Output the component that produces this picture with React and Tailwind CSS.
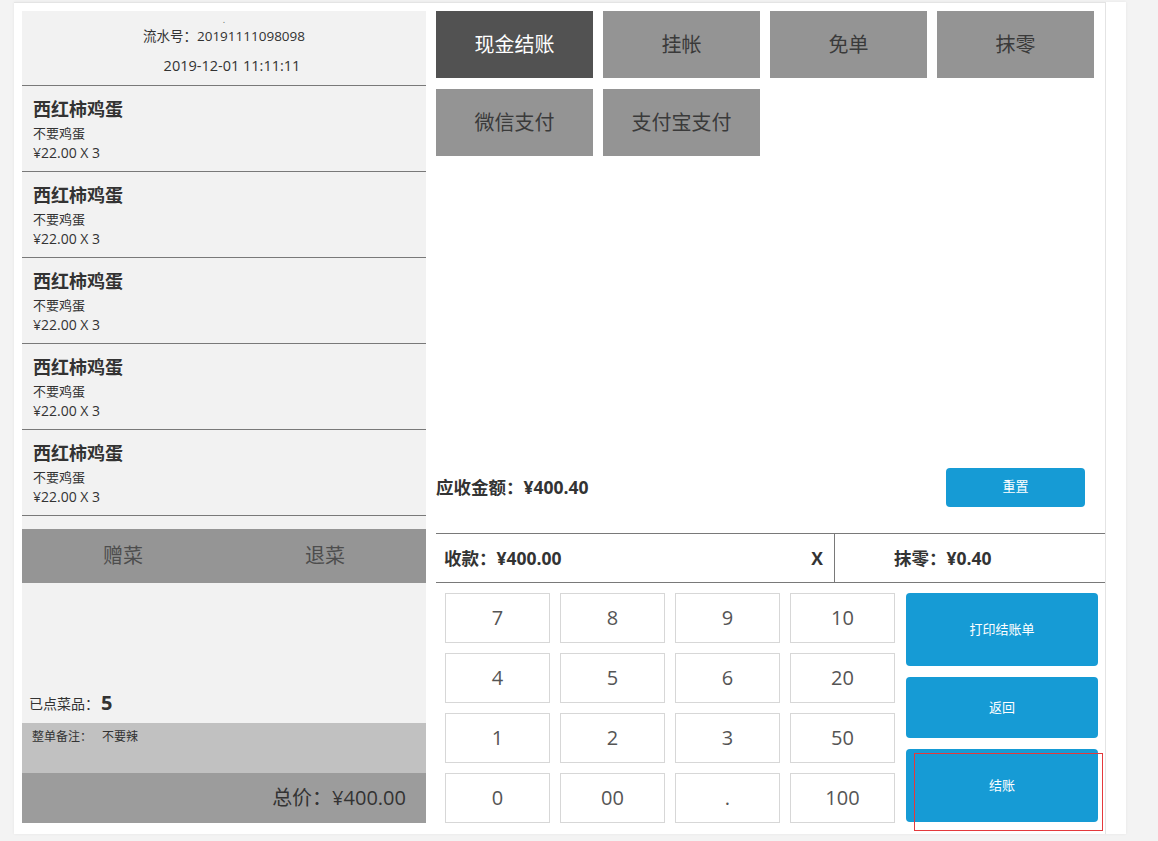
import React from 'react';

const items = Array.from({ length: 5 }, () => ({ name: '西红柿鸡蛋', note: '不要鸡蛋', price: '¥22.00 X 3' }));
const payTypes = ['现金结账', '挂帐', '免单', '抹零', '微信支付', '支付宝支付'];
const keys = ['7', '8', '9', '10', '4', '5', '6', '20', '1', '2', '3', '50', '0', '00', '.', '100'];

const App = () => {
  return (
    <div className="min-h-screen bg-[#f3f3f3] pt-[2px] pl-[14px] font-['Open_Sans','Noto_Sans_CJK_SC',sans-serif] text-[#333]">
      <div className="w-[1112px] h-[832px] bg-white shadow-[0_0_3px_rgba(0,0,0,0.06)]">
        <div className="w-[1092px] h-full border-t border-r border-[#e4e4e4] pl-[8px] pt-[8px] flex gap-[10px]">
          {/* left: order list */}
          <div className="w-[404px] h-[812px] bg-[#f2f2f2] flex flex-col">
            <div className="h-[75px] border-b border-[#797979] flex flex-col items-center shrink-0">
              <div className="text-[9px] leading-[10px] h-[10px] mt-[4px] text-[#666]">.</div>
              <div className="text-[13.5px] leading-[20px] mt-[1px]">流水号：20191111098098</div>
              <div className="text-[14.5px] leading-[20px] mt-[10px] pl-[16px]">2019-12-01 11:11:11</div>
            </div>
            {items.map((it, i) => (
              <div key={i} className="h-[86px] border-b border-[#797979] px-[11px] pt-[11px] shrink-0">
                <div className="text-[18px] leading-[24px] font-bold">{it.name}</div>
                <div className="text-[13px] leading-[20px] mt-[2px]">{it.note}</div>
                <div className="text-[14px] leading-[20px]">{it.price}</div>
              </div>
            ))}
            <div className="h-[13px] shrink-0" />
            <div className="h-[54px] bg-[#959595] grid grid-cols-2 text-[20px] text-[#4d4d4d] shrink-0">
              <div className="flex items-center justify-center">赠菜</div>
              <div className="flex items-center justify-center">退菜</div>
            </div>
            <div className="flex-1 flex items-end pl-[7px] pb-[8px]">
              <span className="text-[14px] leading-[22px]">已点菜品：</span>
              <span className="text-[20px] leading-[25px] font-bold ml-[2px]">5</span>
            </div>
            <div className="h-[50px] bg-[#c1c1c1] flex text-[12px] leading-[28px] pl-[10px] shrink-0">
              <span>整单备注：</span>
              <span className="ml-[10px]">不要辣</span>
            </div>
            <div className="h-[50px] bg-[#9c9c9c] flex items-center justify-end pr-[20px] text-[20px] text-[#333] shrink-0">
              总价：¥400.00
            </div>
          </div>

          {/* right: payment */}
          <div className="w-[669px] h-[812px] flex flex-col">
            <div className="grid grid-cols-[repeat(4,157px)] auto-rows-[67px] gap-x-[10px] gap-y-[11px] shrink-0">
              {payTypes.map((p, i) => (
                <div
                  key={p}
                  className={`flex items-center justify-center text-[20px] ${i === 0 ? 'bg-[#525252] text-white' : 'bg-[#949494] text-[#3a3a3a]'}`}
                >
                  {p}
                </div>
              ))}
            </div>
            <div className="flex-1" />
            <div className="h-[40px] flex items-center justify-between shrink-0">
              <div className="text-[17.5px] font-bold">应收金额：¥400.40</div>
              <button className="w-[139px] h-[39px] mr-[20px] rounded-[4px] bg-[#169bd5] text-white text-[13px]">重置</button>
            </div>
            <div className="h-[26px] shrink-0" />
            <div className="h-[50px] border-t border-b border-[#797979] flex shrink-0">
              <div className="w-[399px] border-r border-[#797979] flex items-center justify-between pl-[8px] pr-[11px]">
                <span className="text-[17.5px] font-bold">收款：¥400.00</span>
                <span className="text-[17.5px] font-bold">X</span>
              </div>
              <div className="flex-1 flex items-center pl-[59px] text-[17.5px] font-bold">抹零：¥0.40</div>
            </div>
            <div className="flex pt-[10px] pl-[9px] gap-[11px] shrink-0">
              <div className="grid grid-cols-[repeat(4,105px)] auto-rows-[50px] gap-x-[10px] gap-y-[10px]">
                {keys.map((k) => (
                  <div key={k} className="border border-[#d7d7d7] bg-white flex items-center justify-center text-[20px] text-[#555]">
                    {k}
                  </div>
                ))}
              </div>
              <div className="w-[192px] flex flex-col gap-[11px] text-white text-[13px]">
                <button className="h-[73px] rounded-[4px] bg-[#169bd5]">打印结账单</button>
                <button className="h-[61px] rounded-[4px] bg-[#169bd5]">返回</button>
                <div className="relative">
                  <button className="w-full h-[73px] rounded-[4px] bg-[#169bd5]">结账</button>
                  <div className="absolute left-[8px] top-[4px] w-[189px] h-[78px] border border-[#e4393c] pointer-events-none" />
                </div>
              </div>
            </div>
          </div>
        </div>
      </div>
    </div>
  );
};

export default App;
